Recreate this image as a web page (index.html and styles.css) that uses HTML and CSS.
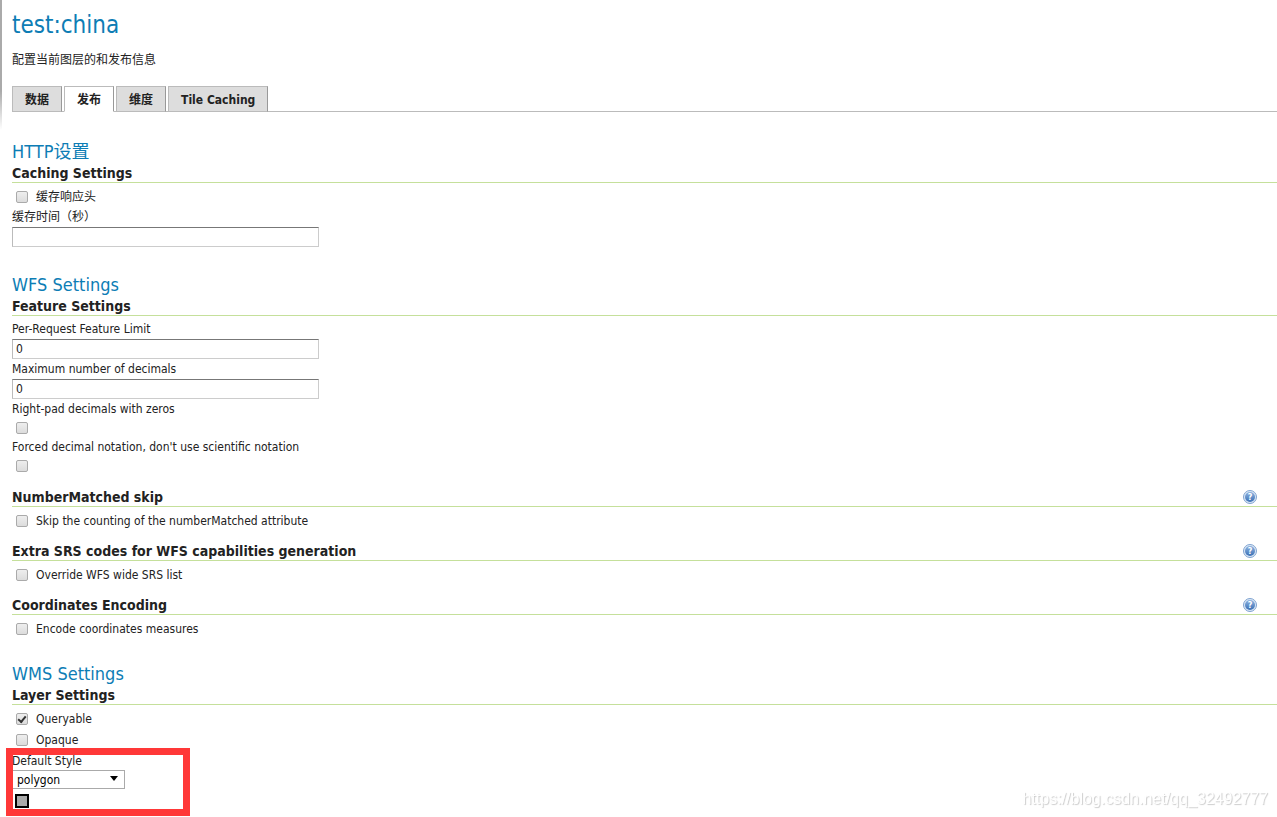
FILE: index.html
```
<!DOCTYPE html>
<html lang="zh-CN">
<head>
  <meta charset="UTF-8">
  <meta name="viewport" content="width=device-width,initial-scale=1">
  <title>test:china</title>
  <link rel="stylesheet" href="styles.css">
</head>
<body>
  <main class="page">
    <h1 class="page-title">test:china</h1>
    <p class="page-desc">配置当前图层的和发布信息</p>

    <nav class="tabs">
      <a class="tab" href="#data">数据</a>
      <a class="tab selected" href="#publish">发布</a>
      <a class="tab" href="#dimensions">维度</a>
      <a class="tab" href="#caching">Tile Caching</a>
    </nav>

    <form class="panel">
      <section class="group">
        <h2>HTTP设置</h2>
        <h3>Caching Settings</h3>
        <div class="fields">
          <div class="check-row">
            <input type="checkbox" id="cacheHeaders">
            <label for="cacheHeaders">缓存响应头</label>
          </div>
          <label class="field-label" for="cacheTime">缓存时间（秒）</label>
          <input class="text" type="text" id="cacheTime">
        </div>
      </section>

      <section class="group">
        <h2>WFS Settings</h2>
        <h3>Feature Settings</h3>
        <div class="fields stacked">
          <label class="field-label" for="maxFeatures">Per-Request Feature Limit</label>
          <input class="text" type="text" id="maxFeatures" value="0">
          <label class="field-label" for="maxDecimals">Maximum number of decimals</label>
          <input class="text" type="text" id="maxDecimals" value="0">
          <label class="field-label" for="padZeros">Right-pad decimals with zeros</label>
          <div class="check-only"><input type="checkbox" id="padZeros"></div>
          <label class="field-label" for="forcedDecimal">Forced decimal notation, don't use scientific notation</label>
          <div class="check-only"><input type="checkbox" id="forcedDecimal"></div>
        </div>

        <h3>NumberMatched skip
          <a class="help" href="#help" aria-label="NumberMatched skip"><svg width="14" height="14" viewBox="0 0 14 14"><use href="#help-icon"/></svg></a>
        </h3>
        <div class="fields">
          <div class="check-row">
            <input type="checkbox" id="skipNumber">
            <label for="skipNumber">Skip the counting of the numberMatched attribute</label>
          </div>
        </div>

        <h3>Extra SRS codes for WFS capabilities generation
          <a class="help" href="#help" aria-label="Extra SRS codes"><svg width="14" height="14" viewBox="0 0 14 14"><use href="#help-icon"/></svg></a>
        </h3>
        <div class="fields">
          <div class="check-row">
            <input type="checkbox" id="overrideSrs">
            <label for="overrideSrs">Override WFS wide SRS list</label>
          </div>
        </div>

        <h3>Coordinates Encoding
          <a class="help" href="#help" aria-label="Coordinates Encoding"><svg width="14" height="14" viewBox="0 0 14 14"><use href="#help-icon"/></svg></a>
        </h3>
        <div class="fields">
          <div class="check-row">
            <input type="checkbox" id="encodeMeasures">
            <label for="encodeMeasures">Encode coordinates measures</label>
          </div>
        </div>
      </section>

      <section class="group">
        <h2>WMS Settings</h2>
        <h3>Layer Settings</h3>
        <div class="fields">
          <div class="check-row">
            <input type="checkbox" id="queryable" checked>
            <label for="queryable">Queryable</label>
          </div>
          <div class="check-row">
            <input type="checkbox" id="opaque">
            <label for="opaque">Opaque</label>
          </div>
          <div class="style-picker">
            <label for="defaultStyle">Default Style</label>
            <span class="select-wrap">
              <select id="defaultStyle">
                <option>polygon</option>
              </select>
            </span>
            <svg class="legend" width="14" height="14" viewBox="0 0 14 14">
              <rect x="1" y="1" width="12" height="12" fill="#aaa" stroke="#000" stroke-width="2"/>
            </svg>
          </div>
        </div>
      </section>
    </form>
  </main>

  <div class="watermark">https://blog.csdn.net/qq_32492777</div>

  <!-- shared help icon -->
  <svg class="defs" width="0" height="0">
    <defs>
      <linearGradient id="help-fill" x1="0" y1="0" x2="0" y2="1">
        <stop offset="0" stop-color="#8fb4e0"/>
        <stop offset="1" stop-color="#3a6fb5"/>
      </linearGradient>
      <symbol id="help-icon" viewBox="0 0 14 14">
        <circle cx="7" cy="7" r="6.5" fill="#dbe7f5" stroke="#7fa3d0"/>
        <circle cx="7" cy="7" r="5" fill="url(#help-fill)"/>
        <text x="7" y="10" text-anchor="middle" font-family="DejaVu Sans, sans-serif" font-size="8" font-weight="bold" fill="#fff">?</text>
      </symbol>
    </defs>
  </svg>
</body>
</html>
```
FILE: styles.css
```
*, *::before, *::after {box-sizing: border-box;}
body {
  margin: 0;
  position: relative;
  background: #fff;
  color: #222;
  font: 12px/20px "DejaVu Sans Condensed", "Noto Sans CJK SC", Tahoma, sans-serif;
}
/* shadow of the side menu */
body::before {
  content: "";
  position: absolute;
  left: 0;
  top: 0;
  width: 2px;
  height: 130px;
  background: linear-gradient(#aaa 70%, #fff);
}
.page {padding: 10px 0 8px 12px;}
h1, h2, h3, p {margin: 0;}
.page-title {font-size: 24px; font-weight: normal; line-height: 30px; color: #0d7db5;}
.page-desc {margin-top: 10px;}

.tabs {display: flex; gap: 2px; margin-top: 16px; border-bottom: 1px solid #bbb;}
.tab {
  height: 26px;
  margin-bottom: -1px;
  padding: 0 12px;
  line-height: 26px;
  font-weight: bold;
  color: #222;
  text-decoration: none;
  background: #ddd;
  border: 1px solid #bbb;
  border-right-color: #999;
}
.tab.selected {background: #fff; border-bottom-color: #fff;}

.panel {padding-top: 28px;}
.group + .group {margin-top: 23px;}
h2 {font-size: 18px; font-weight: normal; line-height: 24px; color: #0d7db5;}
h3 {
  display: flex;
  justify-content: space-between;
  align-items: center;
  padding-right: 20px;
  font-size: 14px;
  line-height: 18px;
  border-bottom: 1px solid #c5e09b;
}
.fields + h3 {margin-top: 11px;}
.help {display: flex;}
.fields {display: flex; flex-direction: column; align-items: flex-start; padding-top: 3px;}
.stacked {padding-bottom: 2px;}
.check-row {display: flex; align-items: center; height: 21px;}
.check-only {display: flex; align-items: center; height: 18px;}

input, select {font: inherit; color: inherit;}
.text {
  width: 307px;
  height: 20px;
  padding: 0 3px;
  border: 1px solid #ccc;
  border-top-color: #777;
  border-left-color: #bbb;
}
.text:last-child {margin-bottom: 3px;}
input[type="checkbox"] {
  appearance: none;
  width: 12px;
  height: 12px;
  margin: 0 8px 0 4px;
  border: 1px solid #aaa;
  border-radius: 2px;
  background: linear-gradient(#eee, #dcdcdc);
}
input[type="checkbox"]:checked::after {
  content: "";
  display: block;
  width: 8px;
  height: 5px;
  margin: 2px 0 0 1px;
  border: solid #333;
  border-width: 0 0 2px 2px;
  transform: rotate(-50deg);
}

.style-picker {position: relative; display: flex; flex-direction: column; align-items: flex-start; padding-top: 2px; line-height: 18px;}
/* red frame round the style picker */
.style-picker::after {
  content: "";
  position: absolute;
  left: -6px;
  top: -2px;
  width: 184px;
  height: 68px;
  border: 7px solid #ff3838;
  pointer-events: none;
}
.select-wrap {position: relative; display: flex;}
.select-wrap::after {
  content: "";
  position: absolute;
  right: 7px;
  top: 6px;
  border: 4px solid transparent;
  border-top: 5px solid #000;
  border-bottom: 0;
  pointer-events: none;
}
select {appearance: none; width: 113px; height: 19px; padding: 0 4px; border: 1px solid #aaa; border-radius: 0; background: #fff; color: #000;}
.legend {margin: 5px 0 0 3px;}

.watermark {
  position: fixed;
  right: 9px;
  bottom: 8px;
  font: 16px/20px "Liberation Sans", Arial, sans-serif;
  color: #fff;
  text-shadow: 1px 1px 1px #ccc;
}
.defs {position: absolute;}
```
